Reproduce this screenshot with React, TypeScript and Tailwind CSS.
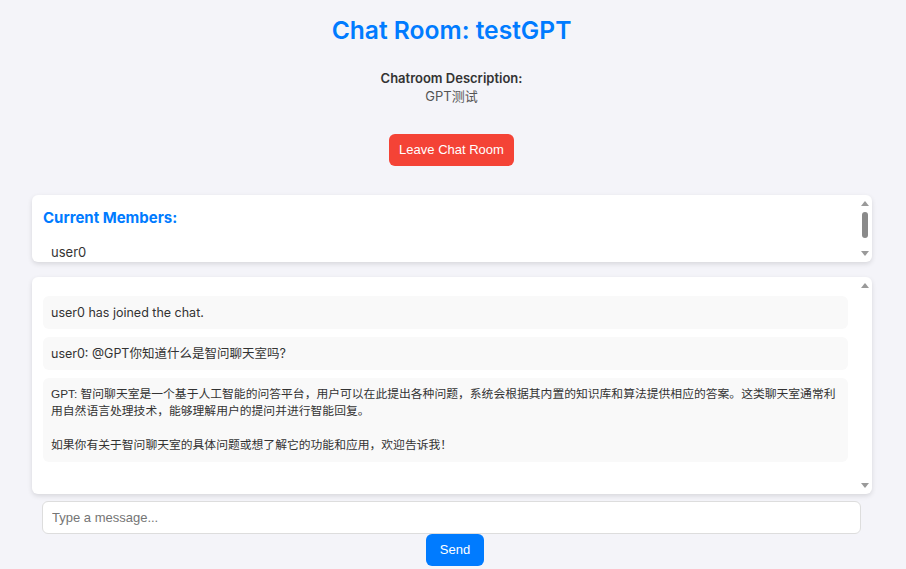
const messages = [
  { id: 1, text: "user0 has joined the chat.", ai: false },
  { id: 2, text: "user0: @GPT你知道什么是智问聊天室吗?", ai: false },
  {
    id: 3,
    text:
      "GPT: 智问聊天室是一个基于人工智能的问答平台，用户可以在此提出各种问题，系统会根据其内置的知识库和算法提供相应的答案。这类聊天室通常利用自然语言处理技术，能够理解用户的提问并进行智能回复。\n\n如果你有关于智问聊天室的具体问题或想了解它的功能和应用，欢迎告诉我！",
    ai: true,
  },
]

const members = ["user0"]

function Arrow({ down }: { down?: boolean }) {
  return (
    <svg width="8" height="5" viewBox="0 0 8 5" className="block">
      {down ? <path d="M0 0h8L4 5z" fill="#9a9a9a" /> : <path d="M0 5h8L4 0z" fill="#9a9a9a" />}
    </svg>
  )
}

// fake classic scrollbar column
function Scrollbar({ thumb }: { thumb?: boolean }) {
  return (
    <div className="flex w-[14px] shrink-0 flex-col items-center py-[6px]">
      <Arrow />
      <div className="flex w-full flex-1 justify-center pt-[6px]">
        {thumb && <div className="h-[26px] w-[6px] rounded-full bg-[#8a8a8a]" />}
      </div>
      <Arrow down />
    </div>
  )
}

export default function App() {
  return (
    <div className="min-h-screen bg-[#f4f4f9] text-[#333] font-['Inter','Noto_Sans_CJK_SC',sans-serif]">
      {/* Header */}
      <div className="flex flex-col items-center pr-[3px] pt-[13px]">
        <h1 className="text-[24.6px] leading-[34px] font-semibold text-[#007bff]">
          Chat Room: testGPT
        </h1>
        <div className="mt-[22px] text-center text-[13px] leading-[18px]">
          <p className="font-semibold text-[#333]">Chatroom Description:</p>
          <p className="text-[#555]">GPT测试</p>
        </div>
        <button className="mt-[29px] h-8 w-[125px] rounded-md bg-[#f44336] text-[13px] text-white font-['Liberation_Sans',Arial,sans-serif]">
          Leave Chat Room
        </button>
      </div>

      <div className="ml-[32px] w-[840px]">
        {/* Members */}
        <div className="mt-[29px] flex h-[67px] overflow-hidden rounded-md bg-white shadow-[0_2px_5px_rgba(0,0,0,0.12)]">
          <div className="flex-1 overflow-hidden pl-[11px] pt-[12px]">
            <h3 className="text-[15px] leading-[22px] font-bold text-[#007bff]">Current Members:</h3>
            <ul className="mt-[7px]">
              {members.map((m) => (
                <li key={m} className="py-2 pl-2 text-[13px] leading-[17px]">
                  {m}
                </li>
              ))}
            </ul>
          </div>
          <Scrollbar thumb />
        </div>

        {/* Messages */}
        <div className="mt-[15px] flex h-[217px] overflow-hidden rounded-md bg-white shadow-[0_2px_5px_rgba(0,0,0,0.12)]">
          <div className="flex flex-1 flex-col gap-2 overflow-hidden pl-[11px] pr-[10px] pt-[19px]">
            {messages.map((msg) => (
              <div
                key={msg.id}
                className={
                  msg.ai
                    ? "whitespace-pre-wrap rounded-md bg-[#f9f9f9] p-2 text-[11.8px] leading-[17px] font-['Liberation_Sans','Noto_Sans_CJK_SC',sans-serif]"
                    : "rounded-md bg-[#f9f9f9] p-2 text-[12.5px] leading-[17px]"
                }
              >
                {msg.text}
              </div>
            ))}
          </div>
          <Scrollbar />
        </div>

        {/* Composer */}
        <div className="mt-[7px] pl-[10px] pr-[11px]">
          <input
            type="text"
            placeholder="Type a message..."
            className="h-[33px] w-full rounded-md border border-[#ddd] bg-white px-[9px] text-[13px] font-['Liberation_Sans',Arial,sans-serif] outline-none placeholder:text-[#757575]"
          />
        </div>
        <div className="flex justify-center">
          <button className="ml-[6px] h-8 w-[58px] rounded-md bg-[#007bff] text-[13px] text-white font-['Liberation_Sans',Arial,sans-serif]">
            Send
          </button>
        </div>
      </div>
    </div>
  )
}
